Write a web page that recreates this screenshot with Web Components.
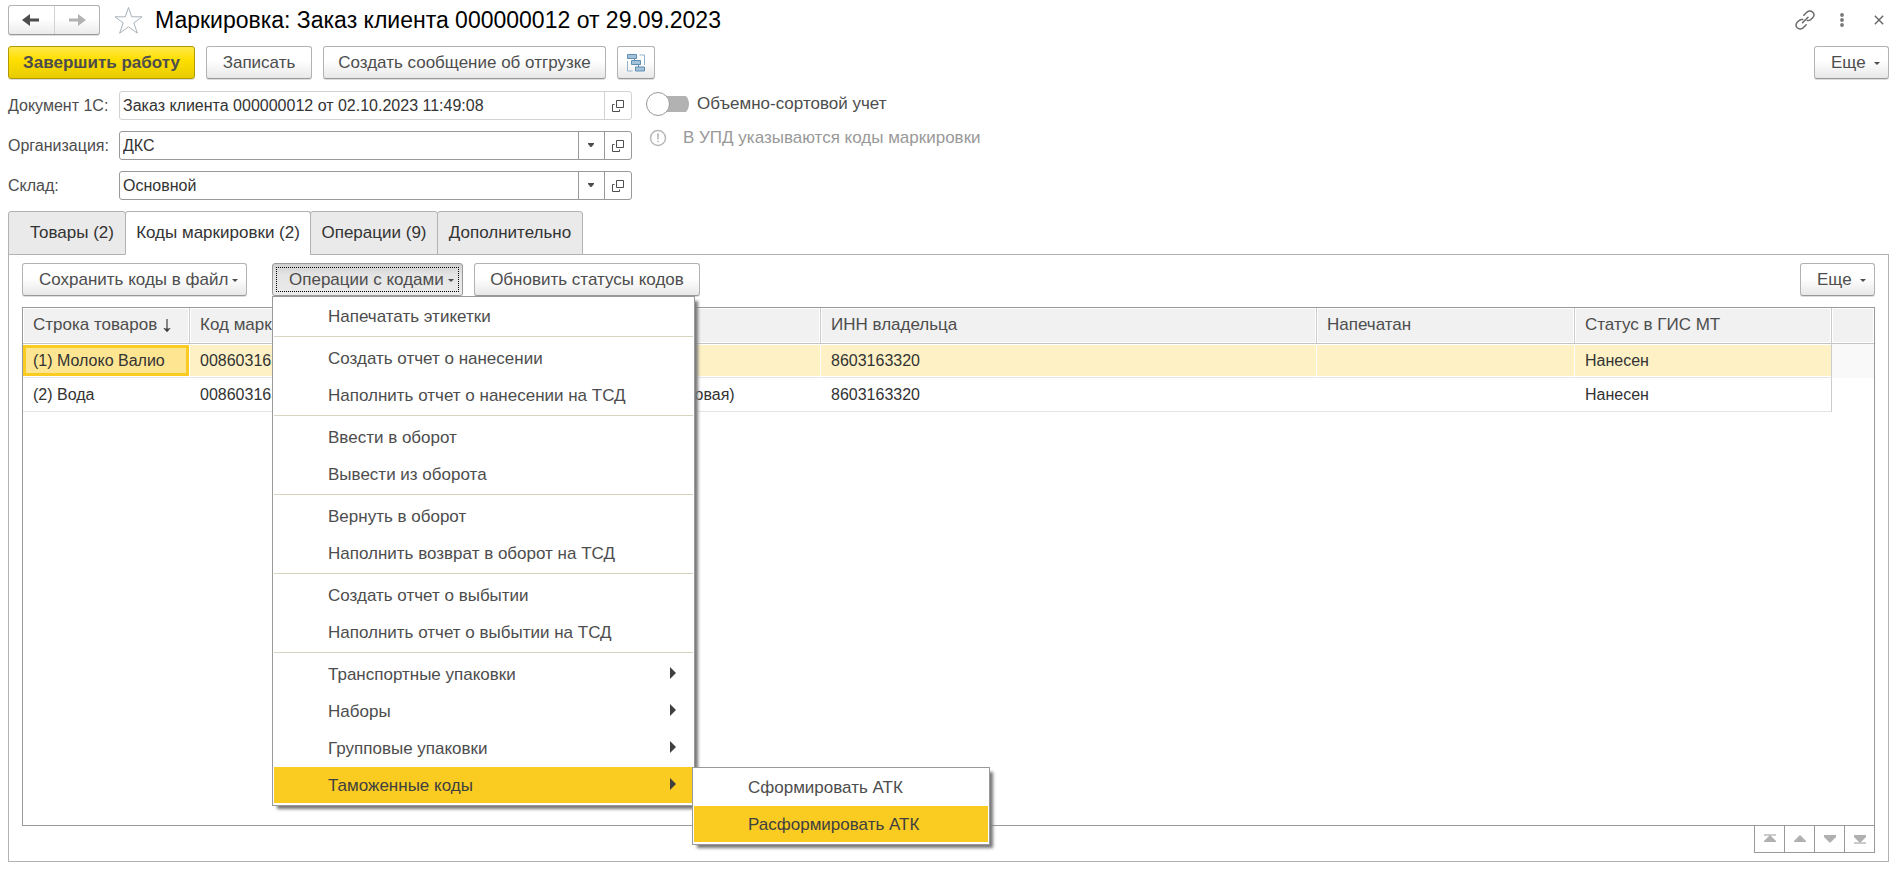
<!DOCTYPE html>
<html lang="ru">
<head>
<meta charset="utf-8">
<title>Маркировка: Заказ клиента</title>
<style>
html, body { margin: 0; }
body { font: 17px/20px "Liberation Sans", Arial, sans-serif; color: #4d4d4d; background: #fff; }
</style>
</head>
<body>
<marking-form></marking-form>

<template id="t-button">
<style>
:host { display: block; flex: none; }
button { display: flex; align-items: center; justify-content: center; box-sizing: border-box; height: 33px; width: 100%; padding: 0; margin: 0; font: inherit; line-height: 20px; color: #4d4d4d; white-space: nowrap; background: linear-gradient(#fff 45%, #e8e8e8); border: 1px solid #b2b2b2; border-bottom-color: #999; border-radius: 3px; box-shadow: 0 1px 0 #ddd; }
i { display: none; width: 0; height: 0; border: 3px solid transparent; border-top-color: #4d4d4d; border-bottom-width: 0; margin-top: 2px; }
:host([drop]) button { padding: 0 8px 0 16px; justify-content: space-between; }
:host([drop]) i { display: block; }
:host([primary]) button { font-weight: bold; background: linear-gradient(#ffe94d, #ffdf00 40%, #e8cc00); border-color: #b09a00; box-shadow: 0 1px 0 #ddd; }
:host([open]) button { background: linear-gradient(#cfcfcf, #e4e4e4 35%, #ebebeb); border-color: #999; outline: 1px dotted #000; outline-offset: -5px; }
</style>
<button type="button"><slot></slot><i></i></button>
</template>

<template id="t-field">
<style>
:host { display: flex; align-items: center; font-size: 16px; --line: #999; }
:host([readonly]) { --line: #d2d2d2; }
label { width: 111px; flex: none; white-space: nowrap; }
.box { display: flex; flex: 1; box-sizing: border-box; height: 29px; border: 1px solid var(--line); border-radius: 3px; background: #fff; overflow: hidden; }
input { flex: 1; min-width: 0; border: 0; outline: 0; padding: 0 3px; margin: 0; font: inherit; color: #333; background: none; }
button { width: 27px; padding: 0 1px 0 0; border: 0; border-left: 1px solid var(--line); background: none; display: grid; place-items: center; }
.drop { width: 26px; }
:host([readonly]) .drop { display: none; }
svg { display: block; }
</style>
<label for="value"></label>
<div class="box"><input id="value" type="text">
<button type="button" class="drop" aria-label="Выбрать"><svg width="6" height="5"><path d="M0 0h6v1L3.500 4h-1L0 1z" fill="#4d4d4d"/></svg></button>
<button type="button" aria-label="Открыть"><svg width="12" height="12" fill="none" stroke="#4d4d4d"><path d="M4.500 .5h7v7h-7zM2.500 4.500h-2v7h7v-2"/></svg></button></div>
</template>

<template id="t-switch">
<style>
:host { display: block; }
label { display: flex; align-items: center; gap: 8px; }
input { appearance: none; margin: 0; width: 43px; height: 24px; display: flex; align-items: center; background: linear-gradient(#b2b2b2, #b2b2b2) 100% 50% / 32px 16px no-repeat; border-radius: 12px; }
input::before { content: ""; box-sizing: border-box; width: 24px; height: 24px; border: 1px solid #999; border-radius: 50%; background: #fff; }
</style>
<label><input type="checkbox" role="switch"><span><slot></slot></span></label>
</template>

<template id="t-tabs">
<style>
:host { display: block; }
div { display: grid; grid-template-columns: 117px 185px 127px 145px; height: 44px; }
button { box-sizing: border-box; margin: 0 -1px 0 0; padding: 0; font: inherit; color: #333; white-space: nowrap; background: #eaeaea; border: 1px solid #b2b2b2; border-radius: 3px 3px 0 0; }
button:first-child { padding-left: 10px; }
button[aria-selected=true] { background: #fff; border-bottom-color: #fff; }
</style>
<div role="tablist"></div>
</template>

<template id="t-menu">
<style>
:host { display: block; box-sizing: border-box; position: absolute; z-index: 2; background: #fff; border: 1px solid #999; padding: 1px; box-shadow: 4px 4px 3px -1px #777; }
</style>
<div role="menu"><slot></slot></div>
</template>

<template id="t-item">
<style>
:host { display: flow-root; position: relative; }
button { display: flex; align-items: center; justify-content: space-between; box-sizing: border-box; width: 100%; height: 36px; margin: 0 0 1px; padding: 2px 17px 0 54px; border: 0; background: none; font: inherit; color: #4d4d4d; text-align: left; white-space: nowrap; }
:host([current]) button { background: #facb20; color: #404040; }
:host([divided]) { border-top: 1px solid #d8d3bf; margin-top: 1px; padding-top: 3px; }
svg { display: none; margin-bottom: 4px; }
:host([sub]) svg { display: block; }
</style>
<button type="button" role="menuitem"><span></span><svg width="6" height="12"><path d="M0 0l6 6-6 6z" fill="#404040"/></svg></button>
<slot></slot>
</template>

<template id="t-table">
<style>
:host { display: flex; flex-direction: column; flex: 1; }
.frame { flex: 1; border: 1px solid #999; }
table { width: 100%; border-collapse: separate; border-spacing: 0; table-layout: fixed; }
th, td { box-sizing: border-box; padding: 0 10px; text-align: left; font-weight: normal; white-space: nowrap; overflow: hidden; }
th { height: 36px; padding-bottom: 2px; color: #4d4d4d; background: #f1f1f1; border-right: 1px solid #ccc; border-bottom: 1px solid #c4c4c4; box-shadow: inset 0 0 0 1px #fff; }
th:last-child { border-right: 0; }
th svg { margin-left: 6px; vertical-align: -3px; }
td { height: 34px; font-size: 16px; color: #333; border-bottom: 1px solid #e5e5e5; }
.chosen td { background: #fdf1c5; border-right: 1px solid #fff; box-shadow: inset 0 1px #fff, inset 0 -1px #fff; }
.chosen td:first-child { padding: 0; }
.chosen td:first-child div { box-sizing: border-box; height: 31px; padding: 0 7px; line-height: 25px; border: 3px solid #facb20; background: #fee592; }
tr td:nth-last-child(2), .chosen td:nth-last-child(2) { border-right: 1px solid #ccc; }
tr td:last-child { border: 0; }
.chosen td:last-child { background: #f9f9f9; box-shadow: none; border: 0; }
nav { display: flex; align-self: flex-end; margin-top: -1px; border: 1px solid #999; }
nav button { width: 30px; height: 26px; padding: 0; border: 0; background: #fff; display: grid; place-items: center; }
nav button + button { border-left: 1px solid #999; }
nav button:first-child { width: 29px; }
</style>
<div class="frame"><table>
<colgroup><col style="width:167px"><col style="width:456px"><col style="width:175px"><col><col style="width:258px"><col style="width:257px"><col style="width:42px"></colgroup>
<thead><tr><th>Строка товаров<svg width="8" height="14" fill="none" stroke="#404040"><path d="M4 0v12" stroke-width="1.200"/><path d="M1 9.500h6L4 13z" fill="#404040" stroke="none"/><path d="M.8 9L4 12.500 7.200 9"/></svg></th><th>Код маркировки</th><th></th><th>ИНН владельца</th><th>Напечатан</th><th>Статус в ГИС МТ</th><th></th></tr></thead>
<tbody>
<tr class="chosen"><td><div>(1) Молоко Валио</div></td><td>008603163320</td><td></td><td>8603163320</td><td></td><td>Нанесен</td><td></td></tr>
<tr><td>(2) Вода</td><td>008603163320</td><td>(столовая)</td><td>8603163320</td><td></td><td>Нанесен</td><td></td></tr>
</tbody></table></div>
<nav>
<button type="button" aria-label="В начало"><svg width="14" height="10"><path d="M1 0h12v2H1z" fill="#ccc"/><path d="M7 1l6 6v1H1V7z" fill="#b0b0b0"/></svg></button>
<button type="button" aria-label="Вверх"><svg width="14" height="10"><path d="M7 1l6 6v1H1V7z" fill="#b0b0b0"/></svg></button>
<button type="button" aria-label="Вниз"><svg width="14" height="10"><path d="M7 9L1 3V1h12v2z" fill="#b0b0b0"/></svg></button>
<button type="button" aria-label="В конец"><svg width="14" height="10"><path d="M1 8h12v2H1z" fill="#ccc"/><path d="M7 9L1 3V1h12v2z" fill="#b0b0b0"/></svg></button>
</nav>
</template>

<template id="t-form">
<style>
:host { display: flex; flex-direction: column; box-sizing: border-box; min-height: 100vh; padding: 5px 8px 7px 8px; }
header { display: flex; align-items: center; height: 30px; }
.nav { display: flex; box-sizing: border-box; width: 92px; height: 30px; border: 1px solid #b2b2b2; border-bottom-color: #999; border-radius: 3px; background: linear-gradient(#fff 45%, #ebebeb); box-shadow: 0 1px 0 #ddd; }
.nav button { flex: 1; }
.nav button + button { border-left: 1px solid #d2d2d2; }
header button { padding: 0; border: 0; background: none; display: grid; place-items: center; }
.star { margin: 0 12px 0 14px; }
h1 { flex: 1; margin: 0; font-size: 23px; line-height: 28px; font-weight: normal; color: #000; white-space: nowrap; }
.win { display: flex; gap: 17px; }
.win button { width: 20px; height: 20px; }
.row { display: flex; align-items: flex-start; gap: 11px; }
.commands { margin-top: 11px; }
.push { margin-left: auto; }
.more { width: 75px; }
.finish { width: 187px; }
.write { width: 106px; }
.message { width: 283px; }
.structure { width: 38px; }
.save { width: 225px; }
.operations { width: 191px; }
.refresh { width: 226px; }
.fields { margin-top: 12px; gap: 14px; }
.col { display: grid; gap: 11px; width: 624px; }
.side { display: grid; gap: 12px; padding-top: 1px; }
.note { display: flex; align-items: center; gap: 16px; height: 20px; padding-left: 3px; color: #999; }
ui-tabs { margin-top: 11px; position: relative; }
.panel { flex: 1; display: flex; flex-direction: column; margin-top: -1px; padding: 8px 13px 8px 13px; border: 1px solid #b2b2b2; }
.anchor { position: relative; margin-left: 14px; }
.anchor > ui-menu { top: 33px; left: 0; width: 423px; }
ui-item > ui-menu { top: 0; left: 418px; width: 298px; }
ui-table { margin-top: 11px; }
</style>
<header>
<div class="nav">
<button type="button" aria-label="Назад"><svg width="18" height="14"><path d="M0 7l8-6v4.500h9v3H8V13z" fill="#4d4d4d"/></svg></button>
<button type="button" aria-label="Вперед"><svg width="18" height="14"><path d="M18 7l-8-6v4.500H1v3h9V13z" fill="#b2b2b2"/></svg></button>
</div>
<button class="star" type="button" aria-label="Избранное"><svg width="29" height="29" viewBox="0 0 29 29"><path d="M14.500 1.500l3.200 9.300h10.300l-8.200 6.100 3.600 10.300-8.900-6.400-8.900 6.400 3.600-10.300L1 10.800h10.300z" fill="#fff" stroke="#a9b2ba"/></svg></button>
<h1>Маркировка: Заказ клиента 000000012 от 29.09.2023</h1>
<div class="win">
<button type="button" aria-label="Ссылка"><svg width="20" height="20" viewBox="0 0 20 20" fill="none" stroke="#6a6a6a" stroke-width="1.500" stroke-linecap="round"><path d="M7.500 12.800L13 7.300M8.800 5.200L11.500 2.500C13.200.8 16 .6 17.800 2.200S19.300 6.200 17.500 8L15.800 9.500C14.800 10.400 13.500 10.800 12.300 10.500M11.200 14.800L8.500 17.500C6.800 19.200 4 19.400 2.200 17.800S.7 13.800 2.500 12L4.200 10.500C5.200 9.600 6.500 9.200 7.700 9.500"/></svg></button>
<button type="button" aria-label="Меню"><svg width="4" height="14" fill="#777"><circle cx="2" cy="2" r="1.900"/><circle cx="2" cy="7" r="1.900"/><circle cx="2" cy="12" r="1.900"/></svg></button>
<button type="button" aria-label="Закрыть"><svg width="10" height="10" stroke="#666" stroke-width="1.400"><path d="M.8.8l8.400 8.400M9.200.8L.8 9.200"/></svg></button>
</div>
</header>
<div class="row commands">
<ui-button class="finish" primary>Завершить работу</ui-button>
<ui-button class="write">Записать</ui-button>
<ui-button class="message">Создать сообщение об отгрузке</ui-button>
<ui-button class="structure"><svg width="18" height="18" fill="#a3c1d8" stroke="#5f8fb3"><path d="M.5 .5h9v4h-9zM4.500 6.500h9v4h-9zM8.500 13h9v4h-9z"/><path d="M7.500 4.500v2M11.500 10.500v2.500"/><path d="M12.500 1h5v10M.5 7v10h5" fill="none" stroke="#8fb3cf"/></svg></ui-button>
<ui-button class="push more" drop>Еще</ui-button>
</div>
<div class="row fields">
<div class="col">
<ui-field readonly label="Документ 1С:" value="Заказ клиента 000000012 от 02.10.2023 11:49:08"></ui-field>
<ui-field label="Организация:" value="ДКС"></ui-field>
<ui-field label="Склад:" value="Основной"></ui-field>
</div>
<div class="side">
<ui-switch>Объемно-сортовой учет</ui-switch>
<div class="note"><svg width="18" height="18"><circle cx="9" cy="9" r="7.500" fill="none" stroke="#b8b8b8" stroke-width="1.500"/><path d="M8 4.500h2l-.3 6H8.300zM8.200 11.700h1.600v1.600H8.200z" fill="#b8b8b8"/></svg><span>В УПД указываются коды маркировки</span></div>
</div>
</div>
<ui-tabs items="Товары (2)|Коды маркировки (2)|Операции (9)|Дополнительно" selected="1"></ui-tabs>
<section class="panel">
<div class="row">
<ui-button class="save" drop>Сохранить коды в файл</ui-button>
<div class="anchor"><ui-button class="operations" drop open>Операции с кодами</ui-button>
<ui-menu>
<ui-item label="Напечатать этикетки"></ui-item>
<ui-item divided label="Создать отчет о нанесении"></ui-item>
<ui-item label="Наполнить отчет о нанесении на ТСД"></ui-item>
<ui-item divided label="Ввести в оборот"></ui-item>
<ui-item label="Вывести из оборота"></ui-item>
<ui-item divided label="Вернуть в оборот"></ui-item>
<ui-item label="Наполнить возврат в оборот на ТСД"></ui-item>
<ui-item divided label="Создать отчет о выбытии"></ui-item>
<ui-item label="Наполнить отчет о выбытии на ТСД"></ui-item>
<ui-item divided sub label="Транспортные упаковки"></ui-item>
<ui-item sub label="Наборы"></ui-item>
<ui-item sub label="Групповые упаковки"></ui-item>
<ui-item sub current label="Таможенные коды"><ui-menu>
<ui-item label="Сформировать АТК"></ui-item>
<ui-item current label="Расформировать АТК"></ui-item>
</ui-menu></ui-item>
</ui-menu></div>
<ui-button class="refresh">Обновить статусы кодов</ui-button>
<ui-button class="push more" drop>Еще</ui-button>
</div>
<ui-table></ui-table>
</section>
</template>

<script>
class Base extends HTMLElement {
  constructor() {
    super();
    this.attachShadow({ mode: "open" });
    this.shadowRoot.append(document.getElementById(this.constructor.template).content.cloneNode(true));
  }
}
class UiButton extends Base { static template = "t-button"; }
class UiSwitch extends Base { static template = "t-switch"; }
class UiMenu extends Base { static template = "t-menu"; }
class UiTable extends Base { static template = "t-table"; }
class UiField extends Base {
  static template = "t-field";
  connectedCallback() {
    this.shadowRoot.querySelector("label").textContent = this.getAttribute("label");
    const input = this.shadowRoot.querySelector("input");
    input.value = this.getAttribute("value");
    input.readOnly = this.hasAttribute("readonly");
  }
}
class UiItem extends Base {
  static template = "t-item";
  connectedCallback() {
    this.shadowRoot.querySelector("span").textContent = this.getAttribute("label");
  }
}
class UiTabs extends Base {
  static template = "t-tabs";
  connectedCallback() {
    const list = this.shadowRoot.querySelector("div");
    list.replaceChildren(...this.getAttribute("items").split("|").map((text, i) => {
      const tab = document.createElement("button");
      tab.type = "button";
      tab.textContent = text;
      tab.setAttribute("role", "tab");
      tab.setAttribute("aria-selected", String(i === Number(this.getAttribute("selected"))));
      return tab;
    }));
  }
}
class MarkingForm extends Base { static template = "t-form"; }
customElements.define("ui-button", UiButton);
customElements.define("ui-switch", UiSwitch);
customElements.define("ui-menu", UiMenu);
customElements.define("ui-table", UiTable);
customElements.define("ui-field", UiField);
customElements.define("ui-item", UiItem);
customElements.define("ui-tabs", UiTabs);
customElements.define("marking-form", MarkingForm);
</script>
</body>
</html>
